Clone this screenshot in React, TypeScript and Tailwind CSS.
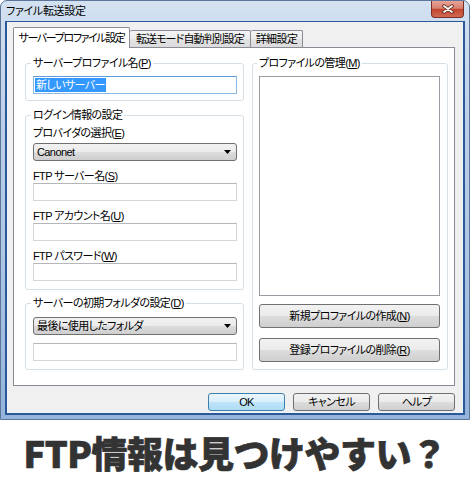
import React from "react";

const FONT =
  "font-['Liberation_Sans','Noto_Sans_CJK_JP',sans-serif] [font-feature-settings:'palt']";
const BTN_BG =
  "bg-[linear-gradient(#f2f2f2,#ebebeb_50%,#dddddd_50%,#cfcfcf)]";

function Mn({ k }: { k: string }) {
  return (
    <>
      (<span className="underline underline-offset-[1px]">{k}</span>)
    </>
  );
}

function Label({ children }: { children: React.ReactNode }) {
  return <div className="h-[14px] leading-[14px] text-[11px] text-black whitespace-nowrap">{children}</div>;
}

function Input({ className = "" }: { className?: string }) {
  return (
    <div
      className={
        "h-[18px] bg-white border border-[#d3d6db] border-t-[#b3b6bb] " + className
      }
    />
  );
}

function Select({ text }: { text: string }) {
  return (
    <div
      className={
        "h-[18px] flex items-center justify-between rounded-[3px] border border-[#707070] pl-[3px] pr-[5px] text-[11px] leading-[14px] text-black " +
        BTN_BG
      }
    >
      <span>{text}</span>
      <svg width="7" height="4" viewBox="0 0 7 4">
        <path d="M0 0h7L3.5 4z" fill="#000" />
      </svg>
    </div>
  );
}

function Legend({ children }: { children: React.ReactNode }) {
  return (
    <legend className="ml-[-2px] px-[2px] text-[11px] leading-[14px] text-black whitespace-nowrap">
      {children}
    </legend>
  );
}

export default function App() {
  return (
    <div className={"w-[470px] bg-white " + FONT}>
      {/* Window */}
      <div className="w-[470px] h-[420px] flex flex-col border border-[#5b7699] rounded-t-[7px] bg-[linear-gradient(#d3e1f1,#bccfe8_30%,#afc6e4_60%,#95b4dc)]">
        {/* Title bar */}
        <div className="h-[20px] flex items-start justify-between">
          <span className="pl-[5px] pt-[3px] text-[11px] leading-[14px] text-black tracking-[-0.3px]">
            ファイル転送設定
          </span>
          <div className="mr-[5px] w-[33px] h-[17px] flex items-center justify-center rounded-b-[4px] border border-t-0 border-[#7e2b22] bg-[linear-gradient(#e7a397,#d7826f_45%,#c2452f_52%,#cf6a55)]">
            <svg width="12" height="10" viewBox="0 0 12 10">
              <path d="M2 2l8 6M10 2l-8 6" stroke="#4d1a12" strokeWidth="3.4" strokeLinecap="round" />
              <path d="M2 2l8 6M10 2l-8 6" stroke="#ffffff" strokeWidth="1.8" strokeLinecap="round" />
            </svg>
          </div>
        </div>
        {/* Frame body */}
        <div className="flex-1 px-[4px] pb-[4px] flex">
          <div className="flex-1 flex border-2 border-t border-[#2a5899]">
            <div className="flex-1 flex border border-t-0 border-[#eef3fa]">
              {/* Client area */}
              <div className="flex-1 flex flex-col bg-[#f0f0f0] pl-[5px] pr-[7px] pt-[5px] tracking-[-0.6px]">
                {/* Tabs */}
                <div className="h-[20px] flex items-end text-[11px] text-black">
                  <div className="relative z-10 -mb-px w-[117px] h-[21px] flex items-center justify-center bg-white border border-b-0 border-[#898c95] rounded-t-[2px] whitespace-nowrap tracking-[-1.4px]">
                    サーバープロファイル設定
                  </div>
                  <div className="w-[121px] h-[17px] flex items-center justify-center pt-[1px] border border-b-0 border-l-0 border-[#898c95] rounded-t-[2px] bg-[linear-gradient(#f4f4f4,#ececec_50%,#e3e3e3_50%,#dcdcdc)] whitespace-nowrap tracking-[-0.9px]">
                    転送モード自動判別設定
                  </div>
                  <div className="w-[52px] h-[17px] flex items-center justify-center pt-[1px] border border-b-0 border-l-0 border-[#898c95] rounded-t-[2px] bg-[linear-gradient(#f4f4f4,#ececec_50%,#e3e3e3_50%,#dcdcdc)] whitespace-nowrap">
                    詳細設定
                  </div>
                </div>
                {/* Panel */}
                <div className="h-[339px] flex items-start gap-[8px] border border-[#898c95] bg-white pt-[8px] pl-[11px] pr-[6px]">
                  {/* Left column */}
                  <div className="flex flex-col">
                    <fieldset className="w-[219px] border border-[#d5dfe5] rounded-[3px] pl-[7px] pr-[6px] pt-[6px] pb-[6px]">
                      <Legend>
                        サーバープロファイル名<Mn k="P" />
                      </Legend>
                      <div className="h-[18px] bg-white border border-[#8dbbe6] border-t-[#5d9bd6] flex items-center pl-[1px]">
                        <span className="bg-[#3399ff] text-white text-[11px] leading-[14px] px-[1px]">
                          新しいサーバー
                        </span>
                      </div>
                    </fieldset>

                    <fieldset className="mt-[7px] w-[219px] border border-[#d5dfe5] rounded-[3px] pl-[7px] pr-[6px] pt-[4px] pb-[8px]">
                      <Legend>ログイン情報の設定</Legend>
                      <Label>
                        プロバイダの選択<Mn k="E" />
                      </Label>
                      <div className="mt-[3px]">
                        <Select text="Canonet" />
                      </div>
                      <div className="mt-[8px]">
                        <Label>
                          FTP サーバー名<Mn k="S" />
                        </Label>
                      </div>
                      <Input />
                      <div className="mt-[8px]">
                        <Label>
                          FTP アカウント名<Mn k="U" />
                        </Label>
                      </div>
                      <Input />
                      <div className="mt-[8px]">
                        <Label>
                          FTP パスワード<Mn k="W" />
                        </Label>
                      </div>
                      <Input />
                    </fieldset>

                    <fieldset className="mt-[6px] w-[219px] border border-[#d5dfe5] rounded-[3px] pl-[7px] pr-[6px] pt-[7px] pb-[8px]">
                      <Legend>
                        サーバーの初期フォルダの設定<Mn k="D" />
                      </Legend>
                      <Select text="最後に使用したフォルダ" />
                      <Input className="mt-[8px]" />
                    </fieldset>
                  </div>

                  {/* Right column */}
                  <fieldset className="w-[196px] border border-[#d5dfe5] rounded-[3px] pl-[6px] pr-[7px] pt-[6px] pb-[7px]">
                    <Legend>
                      プロファイルの管理<Mn k="M" />
                    </Legend>
                    <div className="h-[220px] bg-white border border-[#9a9ca3]" />
                    <button
                      className={
                        "mt-[8px] w-full h-[24px] flex items-center justify-center rounded-[3px] border border-[#707070] text-[11px] leading-[14px] text-black " +
                        BTN_BG
                      }
                    >
                      新規プロファイルの作成<Mn k="N" />
                    </button>
                    <button
                      className={
                        "mt-[10px] w-full h-[24px] flex items-center justify-center rounded-[3px] border border-[#707070] text-[11px] leading-[14px] text-black " +
                        BTN_BG
                      }
                    >
                      登録プロファイルの削除<Mn k="R" />
                    </button>
                  </fieldset>
                </div>
                {/* Bottom buttons */}
                <div className="mt-[7px] flex justify-end gap-[8px] text-[11px] text-black">
                  <button className="w-[77px] h-[18px] flex items-center justify-center rounded-[3px] border border-[#3c7fb1] bg-[linear-gradient(#eaf6fd,#d9effc_50%,#bfe5fa_50%,#aedcf5)]">
                    OK
                  </button>
                  <button
                    className={
                      "w-[77px] h-[18px] flex items-center justify-center rounded-[3px] border border-[#707070] " +
                      BTN_BG
                    }
                  >
                    キャンセル
                  </button>
                  <button
                    className={
                      "w-[77px] h-[18px] flex items-center justify-center rounded-[3px] border border-[#707070] " +
                      BTN_BG
                    }
                  >
                    ヘルプ
                  </button>
                </div>
              </div>
            </div>
          </div>
        </div>
      </div>
      {/* Caption */}
      <div className="mt-[9px] text-center font-['Noto_Sans_CJK_JP',sans-serif] [font-feature-settings:normal] font-black text-[36px] leading-[46px] tracking-[-0.5px] text-[#333333] [-webkit-text-stroke:0.7px_#333333]">
        FTP情報は見つけやすい？
      </div>
    </div>
  );
}
